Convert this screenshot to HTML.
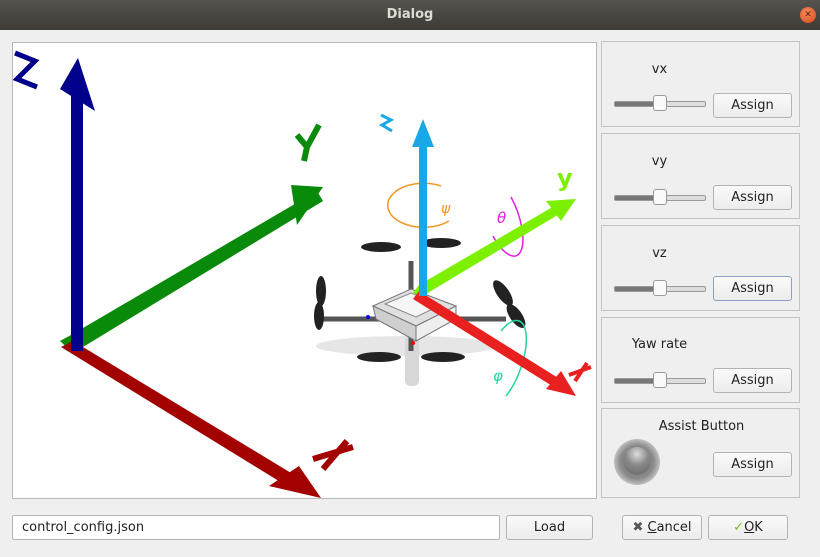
<!DOCTYPE html>
<html><head><style>
body{margin:0;width:820px;height:557px;background:#efefef;font-family:"DejaVu Sans","Liberation Sans",sans-serif;font-size:14px;color:#222;overflow:hidden;position:relative}
.title{position:absolute;left:0;top:0;width:820px;height:30px;background:linear-gradient(#57534e,#3d3b37);color:#dfdbd2;font-weight:bold;text-align:center;line-height:30px;font-size:13px}
.close{position:absolute;right:4px;top:7px;width:16px;height:16px;border-radius:50%;background:radial-gradient(circle at 40% 35%,#f58a5a,#d9481a);color:#5a1b05;font-size:9px;line-height:16px;text-align:center}
.img{position:absolute;left:12px;top:42px;width:583px;height:455px;background:#fff;border:1px solid #b8b8b8}
.grp{position:absolute;left:601px;width:199px;border:1px solid #c4c4c4;box-sizing:border-box}
.lbl{position:absolute;text-align:center;width:199px;font-size:13px}
.btn{position:absolute;border:1px solid #b3b3b3;border-radius:3px;background:linear-gradient(#fafafa,#ececec);box-sizing:border-box;text-align:center;font-size:13px;line-height:23px}
.sl{position:absolute;left:12px;width:90px;height:4px;border:1px solid #9a9a9a;border-radius:2px;background:#ddd}
.sl:before{content:"";position:absolute;left:0;top:0;width:40px;height:4px;background:#777}
.sl:after{content:"";position:absolute;left:38px;top:-7px;width:14px;height:16px;border:1px solid #999;border-radius:3px;background:#fafafa;box-sizing:border-box}
</style></head><body>
<div class="title">Dialog<div class="close">✕</div></div>
<div class="img">
<svg width="583" height="455" viewBox="12 42 583 455">
<polygon points="59,340 70,334 316,190 322,200 82,346 72,352" fill="#0a8a0a"/>
<polygon points="290,184 322,186 296,224" fill="#0a8a0a"/>
<polygon points="60,346 72,340 300,478 294,490" fill="#a30000"/>
<polygon points="320,497 268,485 298,465" fill="#a30000"/>
<rect x="70" y="85" width="12" height="265" fill="#00008a"/>
<polygon points="77,57 59,88 94,110" fill="#00008a"/>
<path d="M14,52 L34,60 L16,78 L36,86" fill="none" stroke="#00008a" stroke-width="5"/>
<path d="M296,134 L306,146 L318,124 M306,146 L303,160" fill="none" stroke="#0a8a0a" stroke-width="6"/>
<path d="M312,458 L352,446 M322,468 L346,440" fill="none" stroke="#a30000" stroke-width="6"/>
<!-- drone -->
<ellipse cx="405" cy="345" rx="90" ry="10" fill="#e6e6e6"/>
<rect x="404" y="335" width="14" height="50" rx="5" fill="#d8d8d8"/>
<line x1="320" y1="318" x2="505" y2="318" stroke="#555" stroke-width="5"/>
<line x1="410" y1="260" x2="410" y2="350" stroke="#555" stroke-width="5"/>
<ellipse cx="380" cy="246" rx="20" ry="5" fill="#222"/><ellipse cx="440" cy="242" rx="20" ry="5" fill="#222"/>
<ellipse cx="378" cy="356" rx="22" ry="5" fill="#222"/><ellipse cx="442" cy="356" rx="22" ry="5" fill="#222"/>
<ellipse cx="320" cy="290" rx="5" ry="15" fill="#222"/><ellipse cx="318" cy="315" rx="5" ry="14" fill="#222"/>
<ellipse cx="502" cy="292" rx="6" ry="15" fill="#222" transform="rotate(-35 502 292)"/>
<ellipse cx="515" cy="315" rx="6" ry="14" fill="#222" transform="rotate(-35 515 315)"/>
<polygon points="372,305 410,288 455,305 415,325" fill="#e0e0e0" stroke="#777"/>
<polygon points="384,303 410,292 440,304 415,316" fill="#f6f6f6" stroke="#888"/>
<polygon points="372,305 415,325 415,340 375,318" fill="#cfcfcf" stroke="#777"/>
<polygon points="415,325 455,305 455,318 415,340" fill="#eee" stroke="#777"/>
<circle cx="367" cy="316" r="2" fill="#00f"/><circle cx="456" cy="316" r="2" fill="#0c0"/><circle cx="412" cy="342" r="2" fill="#e00"/>
<path d="M440,185 A36,22 0 1 0 448,220" fill="none" stroke="#f0961e" stroke-width="1.5"/>
<text x="440" y="212" font-size="14" fill="#f0961e" font-style="italic">ψ</text>
<path d="M510,196 A14,36 -20 1 1 492,235" fill="none" stroke="#e020e0" stroke-width="1.5"/>
<text x="496" y="222" font-size="15" fill="#e020e0" font-style="italic">θ</text>
<path d="M500,330 A15,38 20 1 1 505,395" fill="none" stroke="#20d8a0" stroke-width="1.5"/>
<text x="492" y="380" font-size="15" fill="#20d8a0" font-style="italic">φ</text>
<polygon points="412,292 418,284 555,204 560,212 420,296" fill="#7cf000"/>
<polygon points="575,198 545,200 560,220" fill="#7cf000"/>
<text x="556" y="185" font-size="24" font-weight="bold" fill="#7cf000">y</text>
<polygon points="412,298 418,290 562,380 556,388" fill="#e82020"/>
<polygon points="575,395 545,388 560,370" fill="#e82020"/>
<path d="M568,374 L590,366 M574,380 L586,362" fill="none" stroke="#e82020" stroke-width="4"/>
<rect x="418" y="140" width="8" height="155" fill="#18a8e8"/>
<polygon points="422,118 411,146 433,146" fill="#18a8e8"/>
<path d="M380,114 L390,119 L381,124 L391,130" fill="none" stroke="#18a8e8" stroke-width="3"/>
</svg></div>

<div class="grp" style="top:41px;height:86px"><div class="lbl" style="top:20px;left:-42px">vx</div><div class="sl" style="top:59px"></div><div class="btn" style="left:111px;top:51px;width:79px;height:25px">Assign</div></div>
<div class="grp" style="top:133px;height:86px"><div class="lbl" style="top:20px;left:-42px">vy</div><div class="sl" style="top:61px"></div><div class="btn" style="left:111px;top:51px;width:79px;height:25px">Assign</div></div>
<div class="grp" style="top:225px;height:86px"><div class="lbl" style="top:20px;left:-42px">vz</div><div class="sl" style="top:60px"></div><div class="btn" style="left:111px;top:50px;width:79px;height:25px;border-color:#8aa0bd">Assign</div></div>
<div class="grp" style="top:317px;height:86px"><div class="lbl" style="top:19px;left:-42px">Yaw rate</div><div class="sl" style="top:60px"></div><div class="btn" style="left:111px;top:50px;width:79px;height:25px">Assign</div></div>
<div class="grp" style="top:408px;height:90px"><div class="lbl" style="top:10px">Assist Button</div>
<div style="position:absolute;left:12px;top:30px;width:46px;height:46px;border-radius:50%;background:radial-gradient(circle,#888 50%,#ccc 75%,#eee 100%)"><div style="position:absolute;left:9px;top:8px;width:28px;height:28px;border-radius:50%;background:radial-gradient(circle at 50% 25%,#ddd,#888 45%,#666)"></div></div>
<div class="btn" style="left:111px;top:43px;width:79px;height:25px">Assign</div></div>

<div style="position:absolute;left:12px;top:515px;width:488px;height:25px;border:1px solid #b3b3b3;box-sizing:border-box;background:#fff;border-radius:2px;line-height:23px;padding-left:9px;font-size:13px">control_config.json</div>
<div class="btn" style="left:506px;top:515px;width:87px;height:25px">Load</div>
<div class="btn" style="left:622px;top:515px;width:80px;height:25px"><b style="color:#555">✖</b> <u>C</u>ancel</div>
<div class="btn" style="left:708px;top:515px;width:80px;height:25px"><span style="color:#7ab82c;font-weight:bold">✓</span><u>O</u>K</div>
</body></html>
